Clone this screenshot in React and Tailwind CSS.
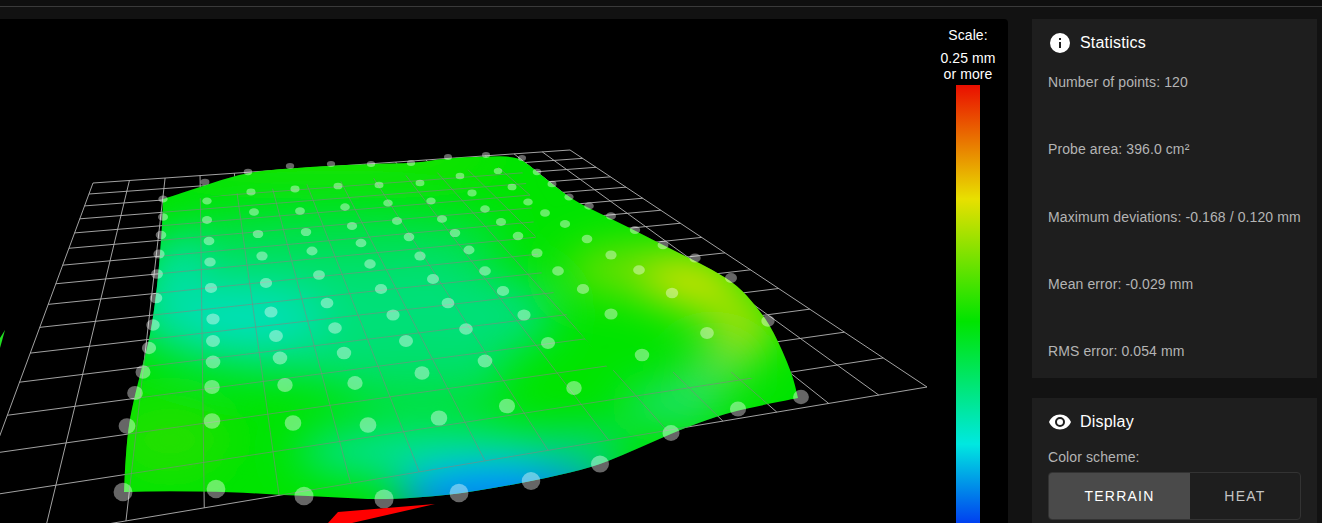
import React from 'react';

const INFO = 'M13,9H11V7H13M13,17H11V11H13M12,2A10,10 0 0,0 2,12A10,10 0 0,0 12,22A10,10 0 0,0 22,12A10,10 0 0,0 12,2Z';
const EYE = 'M12,9A3,3 0 0,0 9,12A3,3 0 0,0 12,15A3,3 0 0,0 15,12A3,3 0 0,0 12,9M12,17A5,5 0 0,1 7,12A5,5 0 0,1 12,7A5,5 0 0,1 17,12A5,5 0 0,1 12,17M12,4.5C7,4.5 2.73,7.61 1,12C2.73,16.39 7,19.5 12,19.5C17,19.5 21.27,16.39 23,12C21.27,7.61 17,4.5 12,4.5Z';

const STATS = [
    'Number of points: 120',
    'Probe area: 396.0 cm²',
    'Maximum deviations: -0.168 / 0.120 mm',
    'Mean error: -0.029 mm',
    'RMS error: 0.054 mm',
];

// probe points as they land on screen, front row first
const PROBE_POINTS = [
    [123, 492], [216, 489], [304, 496], [384, 499], [459, 493], [531, 481], [600, 464], [671, 433], [738, 409], [801, 397],
    [127, 426], [212, 421], [293, 423], [368, 425], [439, 418], [507, 406], [574, 388], [642, 355], [707, 333], [768, 321],
    [135, 393], [212, 387], [285, 385], [355, 383], [422, 373], [485, 361], [548, 343], [611, 314], [672, 293], [731, 278],
    [143, 372], [213, 362], [280, 358], [344, 353], [406, 341], [466, 329], [524, 315], [583, 289], [639, 270], [695, 258],
    [149, 348], [213, 341], [276, 336], [335, 328], [393, 315], [448, 303], [503, 291], [558, 271], [611, 255], [663, 245],
    [153, 325], [213, 319], [271, 312], [327, 303], [381, 289], [433, 279], [485, 271], [537, 253], [587, 239], [635, 230],
    [156, 298], [211, 288], [266, 283], [319, 275], [370, 264], [420, 256], [469, 250], [518, 236], [565, 224], [611, 216],
    [157, 274], [210, 262], [262, 256], [312, 251], [361, 243], [409, 237], [455, 233], [501, 222], [545, 213], [589, 206],
    [159, 254], [209, 241], [258, 234], [306, 232], [352, 226], [397, 221], [442, 219], [485, 209], [528, 202], [569, 197],
    [161, 235], [207, 220], [254, 212], [300, 211], [345, 207], [388, 203], [431, 201], [472, 193], [512, 187], [552, 184],
    [163, 217], [207, 201], [251, 192], [295, 189], [338, 186], [379, 185], [420, 183], [460, 176], [498, 171], [537, 172],
    [163, 199], [205, 182], [248, 172], [290, 166], [331, 164], [371, 164], [411, 163], [448, 157], [486, 155], [522, 158],
];

// corners are listed twice so the smoothing leaves them sharp
const SURFACE_POINTS = [
    [163, 199], [163, 199], [200, 187], [243, 173], [290, 168], [367, 164], [417, 163], [447, 158], [500, 156], [513, 157], [523, 160],
    [547, 180], [573, 200], [597, 212], [630, 228], [657, 242], [687, 257], [713, 270], [737, 285], [757, 307], [773, 330], [792, 373],
    [798, 398], [798, 398], [763, 405], [727, 413], [687, 427], [657, 440], [623, 455], [593, 467], [547, 478], [500, 487], [450, 495],
    [383, 500], [333, 497], [283, 495], [233, 492], [167, 491], [124, 492], [124, 492], [125, 467], [128, 430], [133, 403], [143, 363],
    [150, 337], [157, 290], [162, 230],
];

const smoothPath = (pts) => {
    const mid = (a, b) => [(a[0] + b[0]) / 2, (a[1] + b[1]) / 2];
    const start = mid(pts[pts.length - 1], pts[0]);
    let d = `M${start[0]},${start[1]}`;
    pts.forEach((p, idx) => {
        const m = mid(p, pts[(idx + 1) % pts.length]);
        d += `Q${p[0]},${p[1]} ${m[0]},${m[1]}`;
    });
    return d + 'Z';
};

// where the floor grid shows through the surface
const GRID_VISIBLE = '150,205 300,185 520,165 530,195 540,270 570,320 610,370 670,372 740,372 810,410 700,440 400,523 100,523';

// colour patches under the blur, painted over the green base
const BLOBS = [
    { cx: 340, cy: 315, rx: 215, ry: 64, fill: '#00e078' },
    { cx: 340, cy: 238, rx: 170, ry: 28, fill: '#00e050' },
    { cx: 235, cy: 318, rx: 90, ry: 26, fill: '#00e0bc' },
    { cx: 175, cy: 285, rx: 32, ry: 52, fill: '#00e0a4' },
    { cx: 420, cy: 380, rx: 90, ry: 26, fill: '#00e060' },
    { cx: 430, cy: 452, rx: 135, ry: 24, fill: '#00e0a8' },
    { cx: 580, cy: 448, rx: 50, ry: 14, fill: '#00d0b8' },
    { cx: 505, cy: 498, rx: 112, ry: 30, fill: '#0078ff' },
    { cx: 670, cy: 405, rx: 50, ry: 16, fill: '#20e090' },
    { cx: 715, cy: 368, rx: 34, ry: 22, fill: '#48e048' },
    { cx: 640, cy: 270, rx: 75, ry: 24, fill: '#78e000' },
    { cx: 745, cy: 325, rx: 34, ry: 30, fill: '#a0e000' },
    { cx: 695, cy: 285, rx: 46, ry: 22, fill: '#e8e000' },
    { cx: 170, cy: 440, rx: 60, ry: 40, fill: '#24e000' },
    { cx: 330, cy: 155, rx: 170, ry: 10, fill: '#38e000' },
];

// floor corners; the near left one lies off the canvas
const BACK_LEFT = [93, 183];
const BACK_RIGHT = [570, 150];
const FRONT_RIGHT = [927, 387];
const FRONT_LEFT = [-42, 549];

// projects unit square coordinates onto the floor quad
const project = (u, v) => {
    const [x0, y0] = BACK_LEFT;
    const [x1, y1] = BACK_RIGHT;
    const [x2, y2] = FRONT_RIGHT;
    const [x3, y3] = FRONT_LEFT;
    const dx1 = x1 - x2, dx2 = x3 - x2, sx = x0 - x1 + x2 - x3;
    const dy1 = y1 - y2, dy2 = y3 - y2, sy = y0 - y1 + y2 - y3;
    const det = dx1 * dy2 - dx2 * dy1;
    const g = (sx * dy2 - dx2 * sy) / det;
    const h = (dx1 * sy - sx * dy1) / det;
    const a = x1 - x0 + g * x1, b = x3 - x0 + h * x3;
    const d = y1 - y0 + g * y1, e = y3 - y0 + h * y3;
    const w = g * u + h * v + 1;
    return [(a * u + b * v + x0) / w, (d * u + e * v + y0) / w];
};

const GRID_COLS = 15;
const GRID_ROWS = 15;

const GridLines = ({ stroke, opacity }) => {
    const lines = [];
    for (let i = 0; i <= GRID_COLS; i++) {
        lines.push([project(i / GRID_COLS, 0), project(i / GRID_COLS, 1)]);
    }
    for (let j = 0; j <= GRID_ROWS; j++) {
        lines.push([project(0, j / GRID_ROWS), project(1, j / GRID_ROWS)]);
    }
    return (
        <g stroke={stroke} strokeOpacity={opacity} strokeWidth="1" fill="none">
            {lines.map(([p, q], idx) => (
                <line key={idx} x1={p[0]} y1={p[1]} x2={q[0]} y2={q[1]} />
            ))}
        </g>
    );
};

const HeightMap = () => (
    <svg className="absolute left-0 top-0" width="1008" height="504" viewBox="0 19 1008 504">
        <defs>
            <clipPath id="surface-clip">
                <path d={smoothPath(SURFACE_POINTS)} />
            </clipPath>
            <clipPath id="grid-clip">
                <polygon points={GRID_VISIBLE} />
            </clipPath>
            <filter id="soft" x="-40%" y="-40%" width="180%" height="180%">
                <feGaussianBlur stdDeviation="22" />
            </filter>
        </defs>

        <GridLines stroke="#b4b4b4" opacity="0.9" />

        <g clipPath="url(#surface-clip)">
            <rect x="100" y="140" width="720" height="380" fill="#00e400" />
            <g filter="url(#soft)">
                {BLOBS.map((b, idx) => (
                    <ellipse key={idx} cx={b.cx} cy={b.cy} rx={b.rx} ry={b.ry} fill={b.fill} />
                ))}
            </g>
        </g>

        <g clipPath="url(#grid-clip)">
            <g clipPath="url(#surface-clip)">
                <GridLines stroke="#848484" opacity="0.6" />
            </g>
        </g>

        {PROBE_POINTS.map(([x, y], idx) => {
            const t = (y - 155) / 340;
            const r = 4 + t * 5.5;
            return <ellipse key={idx} cx={x} cy={y} rx={r} ry={r * (0.72 + t * 0.26)} fill="#ffffff" fillOpacity="0.4" />;
        })}

        <polygon points="328,523 338,512 435,504 352,523" fill="#ff0000" />
        <polygon points="5,330 0,348 0,338" fill="#22e022" />
    </svg>
);

const ScaleBar = () => (
    <div className="absolute right-0 top-0 flex h-full w-20 flex-col items-center pt-[9px] text-sm leading-[15px] tracking-[0.1px] text-white">
        <div>Scale:</div>
        <div className="mt-[7px] text-center leading-4">
            0.25 mm
            <br />
            or more
        </div>
        <div className="mt-[3px] w-6 flex-1 bg-[linear-gradient(to_bottom,#ea0e00_0%,#e8e000_26%,#00e400_54%,#00e8e0_82%,#0040f0_100%)]" />
    </div>
);

const Card = ({ className, icon, title, children }) => (
    <div className={`bg-[#1e1e1e] px-4 pt-[12px] ${className}`}>
        <div className="flex h-6 items-center gap-2 text-base tracking-[0.2px] text-white">
            <svg width="24" height="24" viewBox="0 0 24 24" fill="#ffffff">
                <path d={icon} />
            </svg>
            {title}
        </div>
        {children}
    </div>
);

const App = () => {
    return (
        <div className="flex h-[523px] w-[1322px] flex-col overflow-hidden bg-[#121212] font-['Liberation_Sans',Arial,sans-serif]">
            <div className="h-[7px] shrink-0 border-b border-[#3a3a3a] bg-[#0f0f0f]" />
            <div className="flex flex-1 gap-6 pt-3 pr-[5px]">
                <div className="relative w-[1008px] shrink-0 overflow-hidden rounded-tr bg-black">
                    <HeightMap />
                    <ScaleBar />
                </div>
                <div className="flex flex-1 flex-col gap-5">
                    <Card className="h-[359px] shrink-0" icon={INFO} title="Statistics">
                        <div className="mt-[19px] flex flex-col gap-[51.3px] text-sm leading-4 tracking-[0.1px] text-[#b4b4b4]">
                            {STATS.map((stat) => (
                                <div key={stat}>{stat}</div>
                            ))}
                        </div>
                    </Card>
                    <Card className="flex-1" icon={EYE} title="Display">
                        <div className="mt-[15px] text-sm leading-4 tracking-[0.1px] text-[#b4b4b4]">Color scheme:</div>
                        <div className="mt-[7px] flex h-12 overflow-hidden rounded border border-[#333333] text-sm tracking-[1.25px]">
                            <div className="flex w-[141px] items-center justify-center bg-[#4a4a4a] text-white">TERRAIN</div>
                            <div className="flex flex-1 items-center justify-center text-[#c4c4c4]">HEAT</div>
                        </div>
                    </Card>
                </div>
            </div>
        </div>
    );
};

export default App;
